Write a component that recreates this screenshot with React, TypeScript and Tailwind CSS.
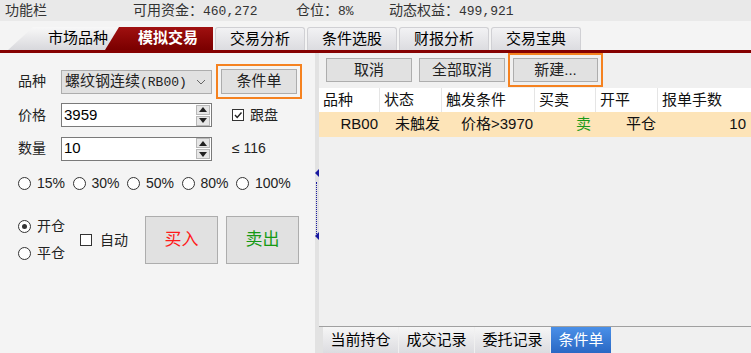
import React from 'react';

function Spinner() {
  return (
    <div className="flex flex-col gap-[1px] mr-[1px]">
      <div className="w-[14px] h-[10px] bg-[#e6e6e6] border border-[#b8b8b8] flex items-center justify-center">
        <svg width="8" height="5" viewBox="0 0 8 5"><path d="M0 5 L4 0 L8 5 Z" fill="#222" /></svg>
      </div>
      <div className="w-[14px] h-[10px] bg-[#e6e6e6] border border-[#b8b8b8] flex items-center justify-center">
        <svg width="8" height="5" viewBox="0 0 8 5"><path d="M0 0 L4 5 L8 0 Z" fill="#222" /></svg>
      </div>
    </div>
  );
}

function Radio({ checked }: { checked?: boolean }) {
  return (
    <span className="w-[13px] h-[13px] rounded-full border border-[#333] bg-white flex items-center justify-center shrink-0">
      {checked && <span className="w-[5px] h-[5px] rounded-full bg-[#333]" />}
    </span>
  );
}

function NumInput({ value }: { value: string }) {
  return (
    <div className="w-[151px] h-[24px] bg-white border border-[#7a7a7a] flex items-center justify-between">
      <span className="pl-[2px] text-[15px] text-black">{value}</span>
      <Spinner />
    </div>
  );
}

export default function App() {
  const tabs = ['交易分析', '条件选股', '财报分析', '交易宝典'];
  const cols = [
    { t: '品种', w: 'w-[61px]' },
    { t: '状态', w: 'w-[62px]' },
    { t: '触发条件', w: 'w-[93px]' },
    { t: '买卖', w: 'w-[61px]' },
    { t: '开平', w: 'w-[62px]' },
    { t: '报单手数', w: 'flex-1' },
  ];
  const pcts = ['15%', '30%', '50%', '80%', '100%'];

  return (
    <div className="w-[751px] h-[353px] overflow-hidden bg-[#f4f4f4] flex flex-col [font-family:'Liberation_Sans','Noto_Sans_CJK_SC',sans-serif] text-[#222]">
      {/* top bar */}
      <div className="h-[21px] bg-[#e9e9e9] flex items-center text-[14px] text-[#333] shrink-0">
        <span className="pl-[5px] w-[133px]">功能栏</span>
        <span className="w-[163px]">可用资金：<span className="[font-family:'Liberation_Mono',monospace] text-[13px]">460,272</span></span>
        <span className="w-[93px]">仓位：<span className="[font-family:'Liberation_Mono',monospace] text-[13px]">8%</span></span>
        <span>动态权益：<span className="[font-family:'Liberation_Mono',monospace] text-[13px]">499,921</span></span>
      </div>

      {/* tabs */}
      <div className="h-[28px] mt-[1px] flex items-end shrink-0 relative text-[15px]">
        <div className="ml-[8px] w-[112px] h-[23px] bg-gradient-to-b from-[#f8f8f8] to-[#d8d8dc] [clip-path:polygon(25px_0,100%_0,100%_100%,0_100%)] flex items-center pl-[40px] text-black">
          市场品种
        </div>
        <div className="-ml-[15px] w-[108px] h-[23px] bg-gradient-to-b from-[#a01010] to-[#7a0000] [clip-path:polygon(14px_0,100%_0,100%_100%,0_100%)] flex items-center pl-[33px] text-white font-bold">
          模拟交易
        </div>
        {tabs.map((t) => (
          <div
            key={t}
            className="ml-[2px] w-[90px] h-[23px] rounded-t-[3px] border border-b-0 border-[#d0d0d4] bg-gradient-to-b from-[#f2f2f4] to-[#dcdce0] flex items-center justify-center text-black"
          >
            {t}
          </div>
        ))}
      </div>
      <div className="h-[3px] bg-[#850000] shrink-0" />

      <div className="flex flex-1 min-h-0">
        {/* left panel */}
        <div className="w-[315px] pl-[18px] flex flex-col text-[14px]">
          <div className="flex items-center h-[35px] mt-[11px]">
            <span className="w-[43px]">品种</span>
            <div className="w-[151px] h-[24px] bg-[#e1e1e1] border border-[#adadad] flex items-center justify-between pl-[3px] pr-[5px] text-[15px]">
              <span className="whitespace-nowrap">螺纹钢连续<span className="[font-family:'Liberation_Mono',monospace] text-[13px]">(RB00)</span></span>
              <svg width="10" height="6" viewBox="0 0 10 6"><path d="M1 1 L5 5 L9 1" stroke="#666" fill="none" strokeWidth="1" /></svg>
            </div>
            <div className="ml-[4px] w-[86px] h-[35px] border-2 border-[#f58220] p-[3px]">
              <div className="w-full h-full bg-[#e1e1e1] border border-[#adadad] flex items-center justify-center text-[15px]">条件单</div>
            </div>
          </div>

          <div className="flex items-center mt-[4px] h-[24px]">
            <span className="w-[43px]">价格</span>
            <NumInput value="3959" />
            <span className="ml-[20px] w-[12px] h-[12px] border border-[#333] bg-white flex items-center justify-center">
              <svg width="10" height="10" viewBox="0 0 10 10"><path d="M2 5 L4.2 7.5 L8.5 2.5" stroke="#222" strokeWidth="1.4" fill="none" /></svg>
            </span>
            <span className="ml-[6px]">跟盘</span>
          </div>

          <div className="flex items-center mt-[10px] h-[23px]">
            <span className="w-[43px]">数量</span>
            <NumInput value="10" />
            <span className="ml-[20px] text-[14px]">≤ 116</span>
          </div>

          <div className="flex items-center mt-[13px] h-[20px] text-[14px] whitespace-nowrap">
            {pcts.map((p) => (
              <span key={p} className="flex items-center gap-[6px] w-[54.5px] shrink-0">
                <Radio />
                <span>{p}</span>
              </span>
            ))}
          </div>

          <div className="flex items-center mt-[23px] h-[48px]">
            <div className="flex flex-col gap-[6px] w-[62px]">
              <span className="flex items-center gap-[6px]"><Radio checked /><span>开仓</span></span>
              <span className="flex items-center gap-[6px]"><Radio /><span>平仓</span></span>
            </div>
            <span className="w-[12px] h-[12px] border border-[#333] bg-white" />
            <span className="ml-[8px] w-[45px]">自动</span>
            <div className="w-[73px] h-[48px] bg-[#e1e1e1] border border-[#adadad] flex items-center justify-center text-[17px] text-[#ff1a1a]">买入</div>
            <div className="ml-[8px] w-[73px] h-[48px] bg-[#e1e1e1] border border-[#adadad] flex items-center justify-center text-[17px] text-[#159a15]">卖出</div>
          </div>
        </div>

        {/* splitter */}
        <div className="w-[4px] bg-[#e2e2e2] relative">
          <span className="absolute left-[0px] top-[116px] w-0 h-0 border-y-[4px] border-y-transparent border-r-[4px] border-r-[#1a1aa0]" />
          <span className="absolute left-[1px] top-[129px] h-[52px] border-l border-dotted border-[#1a1aa0]" />
          <span className="absolute left-[0px] top-[179px] w-0 h-0 border-y-[4px] border-y-transparent border-r-[4px] border-r-[#1a1aa0]" />
        </div>

        {/* right panel */}
        <div className="flex-1 bg-[#f0f0f0] flex flex-col">
          <div className="flex items-center h-[34px] pl-[7px] text-[15px]">
            <div className="w-[86px] h-[24px] bg-[#e1e1e1] border border-[#adadad] flex items-center justify-center">取消</div>
            <div className="ml-[7px] w-[86px] h-[24px] bg-[#e1e1e1] border border-[#adadad] flex items-center justify-center">全部取消</div>
            <div className="ml-[3px] w-[95px] h-[34px] border-2 border-[#f58220] p-[3px] flex items-center">
              <div className="w-[86px] h-[24px] bg-[#e1e1e1] border border-[#adadad] flex items-center justify-center">新建...</div>
            </div>
          </div>

          <div className="flex h-[24px] mt-[1px] bg-white text-[15px] text-[#111]">
            {cols.map((c, i) => (
              <div key={c.t} className={`${c.w} flex items-center pl-[4px] ${i < cols.length - 1 ? 'border-r border-[#e5e5e5]' : ''}`}>
                {c.t}
              </div>
            ))}
          </div>

          <div className="flex h-[25px] bg-[#fde4b8] items-center text-[15px] text-[#111]">
            <span className="w-[61px] text-right pr-[2px]">RB00</span>
            <span className="w-[62px] pl-[15px]">未触发</span>
            <span className="w-[93px] pl-[19px]">价格&gt;3970</span>
            <span className="w-[61px] text-right pr-[5px] text-[#1a9a1a]">卖</span>
            <span className="w-[62px] pl-[30px]">平仓</span>
            <span className="flex-1 text-right pr-[5px]">10</span>
          </div>

          <div className="flex-1" />

          <div className="border-t border-[#a0a0a0] flex h-[27px] text-[15px]">
            <div className="w-[4px] bg-[#e2e2e2]" />
            {['当前持仓', '成交记录', '委托记录'].map((t) => (
              <div key={t} className="w-[75px] mr-[1px] bg-gradient-to-b from-[#f6f6f6] to-[#dcdce0] flex items-center justify-center text-black">
                {t}
              </div>
            ))}
            <div className="w-[60px] bg-gradient-to-b from-[#4a90e8] to-[#2a68c4] flex items-center justify-center text-white">条件单</div>
          </div>
        </div>
      </div>
    </div>
  );
}
